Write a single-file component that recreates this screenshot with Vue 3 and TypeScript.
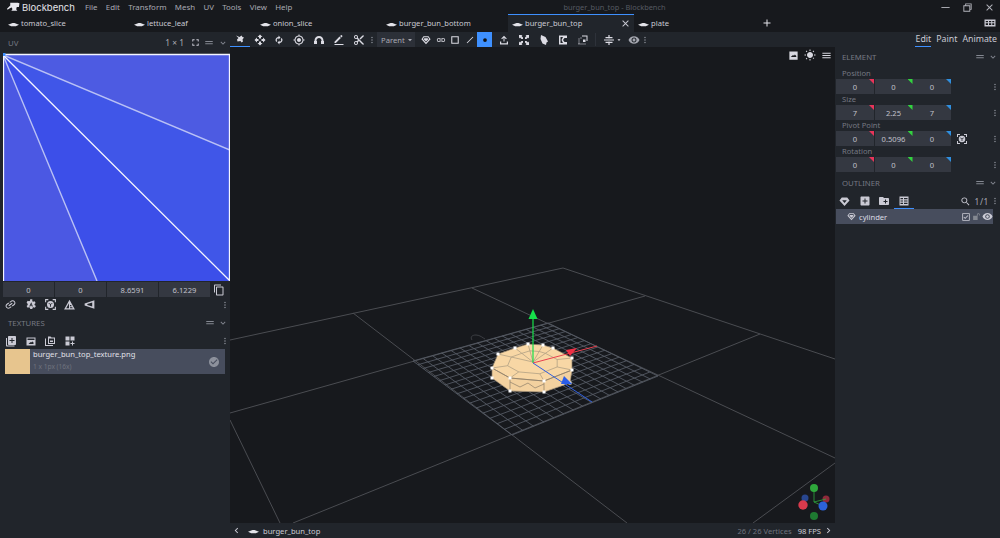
<script setup lang="ts">
interface Tab { name: string; active?: boolean }
interface Tool { icon: string; active?: boolean; underline?: boolean }

const icons: Record<string, string> = {
  close: 'M19 6.41 17.59 5 12 10.59 6.41 5 5 6.41 10.59 12 5 17.59 6.41 19 12 13.41 17.59 19 19 17.59 13.41 12z',
  add: 'M19 13h-6v6h-2v-6H5v-2h6V5h2v6h6z',
  menu: 'M3 18h18v-2H3zM3 13h18v-2H3zM3 6v2h18V6z',
  lines: 'M3 15h18v-2.4H3zM3 9.4h18V7H3z',
  more: 'M16.59 8.59 12 13.17 7.41 8.59 6 10l6 6 6-6z',
  left: 'M15.41 7.41 14 6l-6 6 6 6 1.41-1.41L10.83 12z',
  right: 'M10 6 8.59 7.41 13.17 12l-4.58 4.59L10 18l6-6z',
  dots: 'M12 8c1.1 0 2-.9 2-2s-.9-2-2-2-2 .9-2 2 .9 2 2 2zm0 2c-1.1 0-2 .9-2 2s.9 2 2 2 2-.9 2-2-.9-2-2-2zm0 6c-1.1 0-2 .9-2 2s.9 2 2 2 2-.9 2-2-.9-2-2-2z',
  move: 'M10 9h4V6h3l-5-5-5 5h3v3zm-1 1H6V7l-5 5 5 5v-3h3v-4zm14 2-5-5v3h-3v4h3v3l5-5zm-9 3h-4v3H7l5 5 5-5h-3v-3z',
  select: 'M4 3l7 3 4-3 2 3 3 1-3 4 1 4-3 2-2-3-6 1-1-4 3-3z',
  rotate: 'M11 3v3C7.5 6.4 5 9 5 12c0 1.6.6 3 1.6 4.1L8.700 14C8 13.200 7.600 12.700 7.600 12c0-1.800 1.400-3.200 3.400-3.500V11l4-4zM17.400 7.900 15.300 10c.7.800 1.100 1.300 1.100 2 0 1.800-1.400 3.200-3.400 3.500V13l-4 4 4 4v-3c3.500-.4 6-3 6-6 0-1.600-.6-3-1.600-4.100z',
  pivot: 'M12 8c-2.210 0-4 1.790-4 4s1.790 4 4 4 4-1.790 4-4-1.790-4-4-4zm8.940 3A8.994 8.994 0 0 0 13 3.060V1h-2v2.060A8.994 8.994 0 0 0 3.060 11H1v2h2.060A8.994 8.994 0 0 0 11 20.940V23h2v-2.060A8.994 8.994 0 0 0 20.940 13H23v-2h-2.060zM12 19c-3.870 0-7-3.130-7-7s3.130-7 7-7 7 3.130 7 7-3.130 7-7 7z',
  magnet: 'M12 4C7 4 3 8 3 13v1h-1v6h6v-6H7v-1c0-2.800 2.200-5 5-5s5 2.200 5 5v1h-1v6h6v-6h-1v-1c0-5-4-9-9-9z',
  brush: 'M3 15.250V18h2.750L15.800 7.940l-2.750-2.750zM18.700 5.040c.39-.39.39-1.020 0-1.410l-1.340-1.340c-.39-.39-1.020-.39-1.410 0l-1.830 1.830 2.750 2.750zM3 20h18v2H3z',
  cut: 'M9.640 7.640c.23-.5.36-1.050.36-1.640 0-2.210-1.790-4-4-4S2 3.790 2 6s1.790 4 4 4c.59 0 1.140-.13 1.640-.36L10 12l-2.360 2.360C7.140 14.130 6.590 14 6 14c-2.210 0-4 1.790-4 4s1.790 4 4 4 4-1.790 4-4c0-.59-.13-1.140-.36-1.640L12 14l7 7h3v-1L9.640 7.640zM6 8c-1.100 0-2-.89-2-2s.9-2 2-2 2 .89 2 2-.9 2-2 2zm0 12c-1.100 0-2-.89-2-2s.9-2 2-2 2 .89 2 2-.9 2-2 2zm6-7.500c-.28 0-.5-.22-.5-.5s.22-.5.5-.5.5.22.5.5-.22.5-.5.5zM19 3l-6 6 2 2 7-7V3z',
  gem: 'M6 3h12l5 7-11 12L1 10zM7.200 5.500 4.400 9.500 12 18l7.600-8.500-2.800-4zM8 8h8l1.500 2L12 15.500 6.500 10z',
  gemSolid: 'M6 3h12l5 7-11 12L1 10zM7 9l5 6 5-6z',
  link: 'M3.900 12c0-1.710 1.390-3.100 3.100-3.100h4V7H7c-2.760 0-5 2.240-5 5s2.240 5 5 5h4v-1.900H7c-1.710 0-3.100-1.390-3.100-3.100zM8 13h8v-2H8v2zm9-6h-4v1.900h4c1.710 0 3.100 1.390 3.100 3.100s-1.390 3.100-3.100 3.100h-4V17h4c2.760 0 5-2.240 5-5s-2.240-5-5-5z',
  square: 'M3 3h18v18H3zM5.500 5.500v13h13v-13z',
  slash: 'M4 18.500 18.500 4 20 5.500 5.500 20z',
  dot: 'M12 7.500a4.500 4.500 0 1 0 0 9 4.500 4.500 0 0 0 0-9z',
  upload: 'M11 15V7.500L8 10.500 6.500 9 12 3.500 17.500 9 16 10.500l-3-3V15zM4 15h2.500v3.500h11V15H20v6H4z',
  fit: 'M2 2h7l-2 2 3 3v3H7L4 7 2 9zM22 2v7l-2-2-3 3h-3V7l3-3-2-2zM2 22v-7l2 2 3-3h3v3l-3 3 2 2zM22 22h-7l2-2-3-3v-3h3l3 3 2-2z',
  pin: 'M6 2l9 4 5 9-3 2-1 5-7-3-4-9z',
  frame: 'M4 3h16v5h-5l-3 4 3 4h5v5H4zM7 6v12h5l-3-6 3-6z',
  dashed: 'M10 3h11v11h-2V5h-9zM3 9h2v2H3zM3 13h2v2H3zM3 17h2v2H3zM7 21h2v-2H7zM11 21h2v-2h-2zM15 21h2v-2h-2zM3 21h2v-2H3zM7 7h2v2H7zM12 11h5v5h-5z',
  align: 'M2 10.800h20v2.400H2zM10.800 2h2.400v7h-2.400zM10.800 15h2.400v7h-2.400zM5 6h14v2.500H5zM5 15.500h14V18H5z',
  caret: 'M6 9h12l-6 7z',
  eye: 'M12 4.500C7 4.500 2.730 7.610 1 12c1.730 4.390 6 7.500 11 7.500s9.270-3.110 11-7.500c-1.730-4.390-6-7.500-11-7.500zM12 17c-2.760 0-5-2.240-5-5s2.240-5 5-5 5 2.240 5 5-2.240 5-5 5zm0-8c-1.660 0-3 1.340-3 3s1.340 3 3 3 3-1.340 3-3-1.340-3-3-3z',
  picture: 'M3 3h18v18H3zM6 15.500h12v-2.500l-3-3-2 2.500-2-1.500z',
  sun: 'M6.760 4.840l-1.800-1.790-1.410 1.410 1.790 1.790 1.420-1.410zM4 11H1v2h3v-2zm9-10h-2v3h2V1zm7.450 3.460l-1.410-1.410-1.790 1.790 1.410 1.410 1.790-1.790zm-3.210 13.700l1.790 1.800 1.410-1.410-1.800-1.790-1.400 1.400zM20 11v2h3v-2h-3zm-8-5c-3.310 0-6 2.690-6 6s2.690 6 6 6 6-2.690 6-6-2.690-6-6-6zm-1 17h2v-3h-2v3zm-7.450-3.460l1.410 1.410 1.790-1.800-1.410-1.410-1.790 1.800z',
  fullscreen: 'M7 14H5v5h5v-2H7v-3zm-2-4h2V7h3V5H5v5zm12 7h-3v2h5v-5h-2v3zM14 5v2h3v3h2V5h-5z',
  copy: 'M16 1H4c-1.100 0-2 .9-2 2v14h2V3h12V1zm3 4H8c-1.100 0-2 .9-2 2v14c0 1.100.9 2 2 2h11c1.100 0 2-.9 2-2V7c0-1.100-.9-2-2-2zm0 16H8V7h11v14z',
  gear: 'M19.400 13c.04-.33.1-.66.1-1s-.06-.67-.1-1l2.100-1.650-2-3.460-2.490 1a7.300 7.300 0 0 0-1.730-1L15.400 2.500h-4l-.38 2.390c-.63.25-1.200.59-1.730 1l-2.490-1-2 3.460L6.900 11c-.04.33-.1.66-.1 1s.06.67.1 1l-2.100 1.650 2 3.460 2.490-1c.53.41 1.100.75 1.730 1l.38 2.390h4l.38-2.390c.63-.25 1.200-.59 1.730-1l2.490 1 2-3.460zM13.400 8l3 7.500h-2l-.5-1.500h-1.800l-.5 1.500h-2zm0 3-.5 1.500h1z',
  target: 'M2 2h6v2H4v4H2zM16 2h6v6h-2V4h-4zM2 16h2v4h4v2H2zM20 16h2v6h-6v-2h4zM12 5.500a6.500 6.500 0 1 0 0 13 6.500 6.500 0 0 0 0-13zm-3 3.500 3 2 3-2 .8 1.200-3 2V16h-1.600v-3.800l-3-2z',
  triangle: 'M12 3l10 18H2zM11 9.500 6 19h5zM13 19h5l-1-2h-4zM13 15h3l-1-2h-2z',
  wedge: 'M21 4v16L3 14v-4zM17 8.500 8 11v2l9 2.500z',
  importBox: 'M8 2h12c1.100 0 2 .9 2 2v14c0 1.100-.9 2-2 2H8c-1.100 0-2-.9-2-2V4c0-1.100.9-2 2-2zm5 4v4H9v2h4v4h2v-4h4v-2h-4V6zM2 6h2v14c0 .6.4 1 1 1h14v2H4c-1.100 0-2-.9-2-2z',
  image: 'M3 5h18v16H3zM5 7v3h14V7zM7 18h10v-3l-2-2-3 2-1-1z',
  folders: 'M8 3h5l2 2h7v13H8zM10 7v9h10V7zM2 7h2v13h14v2H2zM12 11h6v3h-6z',
  board: 'M3 3h8v8H3zM13 3h8v8h-8zM3 13h8v8H3zM16 13h2v3h3v2h-3v3h-2v-3h-3v-2h3z',
  addBox: 'M19 3H5c-1.110 0-2 .9-2 2v14c0 1.100.89 2 2 2h14c1.100 0 2-.9 2-2V5c0-1.100-.9-2-2-2zm-2 10h-4v4h-2v-4H7v-2h4V7h2v4h4v2z',
  newFolder: 'M20 6h-8l-2-2H4c-1.110 0-1.990.89-1.990 2L2 18c0 1.110.89 2 2 2h16c1.110 0 2-.89 2-2V8c0-1.110-.89-2-2-2zm-1 8h-3v3h-2v-3h-3v-2h3V9h2v3h3v2z',
  list: 'M3 3h18v18H3zM5 6v2.500h5V6zM12 6v2.500h7V6zM5 10.800v2.400h5v-2.400zM12 10.800v2.400h7v-2.400zM5 15.500V18h5v-2.500zM12 15.500V18h7v-2.500z',
  search: 'M15.500 14h-.79l-.28-.27C15.410 12.590 16 11.110 16 9.500 16 5.910 13.090 3 9.500 3S3 5.910 3 9.500 5.910 16 9.500 16c1.610 0 3.090-.59 4.230-1.570l.27.28v.79l5 4.990L20.490 19l-4.990-5zm-6 0C7.010 14 5 11.990 5 9.500S7.010 5 9.500 5 14 7.010 14 9.500 11.990 14 9.500 14z',
  checked: 'M4 3h16c.6 0 1 .4 1 1v16c0 .6-.4 1-1 1H4c-.6 0-1-.4-1-1V4c0-.6.4-1 1-1zm1 2v14h14V5zm5 11.500-4-4 1.400-1.400 2.600 2.600 6.100-6.100 1.400 1.400z',
  lock: 'M3 10h12v11H3zM17 3c-2.500 0-4 1.800-4 4v3h2V7c0-1.100.8-2 2-2s2 .9 2 2v2h2V7c0-2.200-1.500-4-4-4z',
  check: 'M12 2C6.480 2 2 6.480 2 12s4.480 10 10 10 10-4.480 10-10S17.520 2 12 2zm-2 15-5-5 1.410-1.410L10 14.170l7.590-7.590L19 8l-9 9z',
}

const menus = ['File', 'Edit', 'Transform', 'Mesh', 'UV', 'Tools', 'View', 'Help']

const tabs: Tab[] = [
  { name: 'tomato_slice' },
  { name: 'lettuce_leaf' },
  { name: 'onion_slice' },
  { name: 'burger_bun_bottom' },
  { name: 'burger_bun_top', active: true },
  { name: 'plate' },
]

const transformTools: Tool[] = [
  { icon: 'select', underline: true },
  { icon: 'move' },
  { icon: 'rotate' },
  { icon: 'pivot' },
  { icon: 'magnet' },
  { icon: 'brush' },
  { icon: 'cut' },
]

const modeTools: Tool[] = [
  { icon: 'gem' },
  { icon: 'link' },
  { icon: 'square' },
  { icon: 'slash' },
  { icon: 'dot', active: true },
]

const meshTools: Tool[] = [
  { icon: 'upload' },
  { icon: 'fit' },
  { icon: 'pin' },
  { icon: 'frame' },
  { icon: 'dashed' },
]

const uvValues = ['0', '0', '8.6591', '6.1229']
const uvTools = ['link', 'gear', 'target', 'triangle', 'wedge']
const textureTools = ['importBox', 'image', 'folders', 'board']

const elementGroups = [
  { label: 'Position', values: ['0', '0', '0'] },
  { label: 'Size', values: ['7', '2.25', '7'] },
  { label: 'Pivot Point', values: ['0', '0.5096', '0'], extra: true },
  { label: 'Rotation', values: ['0', '0', '0'] },
]

// floor grid: 16 x 16 cells squeezed into the perspective quad
type Pt = [number, number]
const project = (u: number, v: number): Pt => {
  const [x0, y0]: Pt = [413, 361]
  const [x1, y1]: Pt = [548, 323]
  const [x2, y2]: Pt = [658, 376]
  const [x3, y3]: Pt = [512, 435]
  const dx1 = x1 - x2, dx2 = x3 - x2, sx = x0 - x1 + x2 - x3
  const dy1 = y1 - y2, dy2 = y3 - y2, sy = y0 - y1 + y2 - y3
  const det = dx1 * dy2 - dx2 * dy1
  const g = (sx * dy2 - dx2 * sy) / det
  const h = (dx1 * sy - sx * dy1) / det
  const a = x1 - x0 + g * x1, b = x3 - x0 + h * x3
  const d = y1 - y0 + g * y1, e = y3 - y0 + h * y3
  const w = g * u + h * v + 1
  return [(a * u + b * v + x0) / w, (d * u + e * v + y0) / w]
}

const gridPath = Array.from({ length: 17 }, (_, i) => {
  const t = i / 16
  const [ax, ay] = project(t, 0)
  const [bx, by] = project(t, 1)
  const [cx, cy] = project(0, t)
  const [ex, ey] = project(1, t)
  return `M${ax} ${ay}L${bx} ${by}M${cx} ${cy}L${ex} ${ey}`
}).join('')

const floorLines = [
  [230, 340, 563, 268], [563, 268, 835, 359], [230, 413, 645, 296], [353, 313, 627, 523],
  [472, 288, 835, 458], [293, 523, 760, 334], [230, 420, 280, 523], [835, 463, 753, 523],
]

const topRing: Pt[] = [
  [492, 368], [498, 354], [515, 348], [528, 344], [543, 345],
  [553, 348], [572, 358], [572, 370], [544, 381], [510, 378],
]
const lowerRing: Pt[] = [[492, 378], [510, 391], [544, 392], [570, 383]]
const hub: Pt = [533, 362]
const inner = topRing.map(([x, y]): Pt => [hub[0] + (x - hub[0]) * 0.62, hub[1] + (y - hub[1]) * 0.62])
const toPoints = (pts: Pt[]) => pts.map((p) => p.join(',')).join(' ')
const spokes = topRing.map((p, i) => {
  const toHub = i >= 1 && i <= 5 ? `L${hub[0]} ${hub[1]}` : ''
  return `M${p[0]} ${p[1]}L${inner[i][0]} ${inner[i][1]}${toHub}`
}).join('')
const handles = [...topRing, ...lowerRing]
</script>

<template>
  <div class="app">
    <header class="titlebar">
      <svg class="logo" viewBox="0 0 24 18"><path d="M6 1h14l3 1-1 7h-4l-1 4 2 3H8l2-3-1-3-3 1-5 3-1-2 6-6z" /></svg>
      <span class="brand">Blockbench</span>
      <nav class="menus">
        <span v-for="item in menus" :key="item">{{ item }}</span>
      </nav>
      <span class="window-title">burger_bun_top - Blockbench</span>
      <div class="window-buttons">
        <svg viewBox="0 0 24 24"><path d="M3 11h18v2H3z" /></svg>
        <svg viewBox="0 0 24 24"><path d="M7 3h14v14h-3v4H3V7h4zM9 7h9v8h1V5H9zM5 9v10h11V9z" /></svg>
        <svg viewBox="0 0 24 24"><path :d="icons.close" /></svg>
      </div>
    </header>

    <div class="tabbar">
      <div v-for="tab in tabs" :key="tab.name" class="tab" :class="{ active: tab.active }">
        <svg class="tab-icon" viewBox="0 0 12 5"><path d="M0 2.800 5 .8h2l5 2-3.500 1.500h-5z" /></svg>
        <span>{{ tab.name }}</span>
        <svg v-if="tab.active" class="tab-close" viewBox="0 0 24 24"><path :d="icons.close" /></svg>
      </div>
      <svg class="tab-add" viewBox="0 0 24 24"><path :d="icons.add" /></svg>
      <svg class="tab-grid" viewBox="0 0 24 24"><path d="M1 5h22v14H1zM8 8H3.500v2.500H8zM14.500 8h-4.500v2.500h4.500zM20.500 8H16.500v2.500h4zM8 12.500H3.500V16H8zM14.500 12.500h-4.500V16h4.500zM20.500 12.500h-4V16h4z" /></svg>
    </div>

    <div class="workspace">
      <aside class="left">
        <div class="panel-head uv-head">
          <span class="panel-title">UV</span>
          <span class="uv-size">1 × 1</span>
          <svg class="ic11 uv-full" viewBox="0 0 24 24"><path :d="icons.fullscreen" /></svg>
          <svg class="ic10 dim" viewBox="0 0 24 24"><path :d="icons.lines" /></svg>
          <svg class="ic10 dim uv-more" viewBox="0 0 24 24"><path :d="icons.more" /></svg>
        </div>
        <svg class="uv-canvas" viewBox="3 53 227 228">
          <polygon points="3,55 3,281 97,281" fill="#4b58e3" />
          <polygon points="3,55 97,281 230,281" fill="#3c4fe9" />
          <polygon points="3,55 230,281 230,150" fill="#4056e8" />
          <polygon points="3,55 230,55 230,150" fill="#4d5be2" />
          <path d="M3 55 97 281M3 55 230 150" stroke="#b9c1f6" stroke-width="1.400" fill="none" />
          <path d="M3 55 230 281M3 54.500H230M3.500 54V281M229.500 54V281" stroke="#f4f5ff" stroke-width="1.300" fill="none" />
          <rect x="2.500" y="53" width="3" height="3" fill="#3e90ff" />
        </svg>
        <div class="uv-inputs">
          <div class="inputs">
            <span v-for="(value, i) in uvValues" :key="i" class="num uv-num">{{ value }}</span>
          </div>
          <svg class="ic12 uv-copy" viewBox="0 0 24 24"><path :d="icons.copy" /></svg>
        </div>
        <div class="icon-row">
          <span v-for="icon in uvTools" :key="icon" class="slot"><svg class="ic13" viewBox="0 0 24 24" :class="{ tilted: icon === 'link' }"><path :d="icons[icon]" /></svg></span>
          <svg class="ic10 dots dim" viewBox="0 0 24 24"><path :d="icons.dots" /></svg>
        </div>
        <div class="panel-head textures-head">
          <span class="panel-title">TEXTURES</span>
          <svg class="ic10 dim push" viewBox="0 0 24 24"><path :d="icons.lines" /></svg>
          <svg class="ic10 dim" viewBox="0 0 24 24"><path :d="icons.more" /></svg>
        </div>
        <div class="icon-row texture-tools">
          <span v-for="icon in textureTools" :key="icon" class="slot"><svg class="ic12" viewBox="0 0 24 24"><path :d="icons[icon]" /></svg></span>
          <svg class="ic10 dots dim" viewBox="0 0 24 24"><path :d="icons.dots" /></svg>
        </div>
        <div class="texture-row">
          <div class="swatch"></div>
          <div class="texture-text">
            <div class="texture-name">burger_bun_top_texture.png</div>
            <div class="texture-meta">1 x 1px (16x)</div>
          </div>
          <svg class="ic12 texture-check" viewBox="0 0 24 24"><path :d="icons.check" /></svg>
        </div>
      </aside>

      <div class="toolbar">
        <span v-for="tool in transformTools" :key="tool.icon" class="tool" :class="{ underline: tool.underline }">
          <svg class="ic12" viewBox="0 0 24 24"><path :d="icons[tool.icon]" /></svg>
        </span>
        <svg class="ic10 tool-dots dim" viewBox="0 0 24 24"><path :d="icons.dots" /></svg>
        <div class="parent-select">
          <span>Parent</span>
          <svg class="ic8" viewBox="0 0 24 24"><path :d="icons.caret" /></svg>
        </div>
        <div class="mode-group">
          <span v-for="tool in modeTools" :key="tool.icon" class="tool narrow" :class="{ active: tool.active }">
            <svg class="ic10" viewBox="0 0 24 24"><path :d="icons[tool.icon]" /></svg>
          </span>
        </div>
        <span v-for="tool in meshTools" :key="tool.icon" class="tool">
          <svg class="ic12" viewBox="0 0 24 24"><path :d="icons[tool.icon]" /></svg>
        </span>
        <span class="divider"></span>
        <span class="tool align">
          <svg class="ic12" viewBox="0 0 24 24"><path :d="icons.align" /></svg>
          <svg class="ic6" viewBox="0 0 24 24"><path :d="icons.caret" /></svg>
        </span>
        <span class="tool eye">
          <svg class="ic12" viewBox="0 0 24 24"><path :d="icons.eye" /></svg>
        </span>
        <svg class="ic10 tool-dots dim" viewBox="0 0 24 24"><path :d="icons.dots" /></svg>
        <div class="modes">
          <span class="mode current">Edit</span>
          <span class="mode">Paint</span>
          <span class="mode">Animate</span>
        </div>
      </div>

      <main class="center">
        <div class="viewport">
          <svg class="scene" viewBox="230 47 605 476">
            <g fill="none">
              <path
                v-for="(line, i) in floorLines"
                :key="i"
                :d="`M${line[0]} ${line[1]}L${line[2]} ${line[3]}`"
                stroke="#4a4c51"
                stroke-width="1"
              />
              <path :d="gridPath" stroke="#555a64" stroke-width="0.9" />
              <path d="M472 340c-2-3 0-5 4-5s7 3 9 4" stroke="#45474c" stroke-width="0.8" />
            </g>
            <polygon :points="toPoints([...topRing.slice(0, 8), ...lowerRing.slice().reverse(), [492, 368]])" fill="#f8d7a5" />
            <path
              d="M492 368 492 378 510 391 544 392 570 383 572 370 544 381 510 378ZM510 378V391M544 381V392"
              fill="#f3d19f"
              stroke="#8b7d68"
              stroke-width="0.7"
            />
            <polyline points="510,382 520,387 528,383 535,388 544,384" fill="none" stroke="#8b7d68" stroke-width="0.7" />
            <polygon :points="toPoints(topRing)" fill="none" stroke="#8b7d68" stroke-width="0.7" />
            <polygon :points="toPoints(inner)" fill="none" stroke="#a8997f" stroke-width="0.7" />
            <path :d="spokes" fill="none" stroke="#a8997f" stroke-width="0.7" />
            <rect v-for="(p, i) in handles" :key="i" :x="p[0] - 1.500" :y="p[1] - 1.500" width="3" height="3" fill="#fff" />
            <path d="M533 363V316" stroke="#16e04a" stroke-width="1.200" />
            <path d="M533 363 597 346" stroke="#e8414f" stroke-width="1" />
            <path d="M533 363 592 402" stroke="#2f5fe0" stroke-width="1" />
            <polygon points="533,309 537.500,319 528.500,319" fill="#16e04a" />
            <polygon points="566,350 577,348 570,356" fill="#ee2f45" />
            <polygon points="564,376 572,384 561,384" fill="#2a5de8" />
            <g>
              <circle cx="805" cy="498" r="3.500" fill="#28468f" />
              <circle cx="826" cy="499" r="3.500" fill="#8f2a3a" />
              <path d="M814 490V502L823 506M814 502 826 499" stroke="#2fa83c" stroke-width="0.8" fill="none" />
              <circle cx="814" cy="516" r="4" fill="#1e7a31" />
              <circle cx="803" cy="505" r="4.700" fill="#d83a4c" />
              <circle cx="823" cy="506" r="4.500" fill="#2c62d8" />
              <circle cx="814" cy="488" r="4" fill="#2fa83c" />
            </g>
          </svg>
          <div class="view-actions">
            <svg class="ic11" viewBox="0 0 24 24"><path :d="icons.picture" /></svg>
            <svg class="ic12" viewBox="0 0 24 24"><path :d="icons.sun" /></svg>
            <svg class="ic11" viewBox="0 0 24 24"><path :d="icons.menu" /></svg>
          </div>
        </div>
        <footer class="statusbar">
          <svg class="ic11" viewBox="0 0 24 24"><path :d="icons.left" /></svg>
          <svg class="status-cube" viewBox="0 0 12 5"><path d="M0 2.800 5 .8h2l5 2-3.500 1.500h-5z" /></svg>
          <span class="status-name">burger_bun_top</span>
          <span class="status-count">26 / 26 Vertices</span>
          <span class="status-fps">98 FPS</span>
          <svg class="ic11" viewBox="0 0 24 24"><path :d="icons.right" /></svg>
        </footer>
      </main>

      <aside class="right">
        <div class="panel-head element-head">
          <span class="panel-title">ELEMENT</span>
          <svg class="ic10 dim push" viewBox="0 0 24 24"><path :d="icons.lines" /></svg>
          <svg class="ic10 dim" viewBox="0 0 24 24"><path :d="icons.more" /></svg>
        </div>
        <div v-for="group in elementGroups" :key="group.label" class="field">
          <div class="field-label">{{ group.label }}</div>
          <div class="field-row">
            <div class="inputs triple">
              <span v-for="(value, i) in group.values" :key="i" class="num axis" :class="`axis-${i}`">{{ value }}</span>
            </div>
            <svg v-if="group.extra" class="ic12 pivot-btn" viewBox="0 0 24 24"><path :d="icons.target" /></svg>
            <svg class="ic10 dots dim" viewBox="0 0 24 24"><path :d="icons.dots" /></svg>
          </div>
        </div>
        <div class="panel-head outliner-head">
          <span class="panel-title">OUTLINER</span>
          <svg class="ic10 dim push" viewBox="0 0 24 24"><path :d="icons.lines" /></svg>
          <svg class="ic10 dim" viewBox="0 0 24 24"><path :d="icons.more" /></svg>
        </div>
        <div class="outliner-tools">
          <span class="slot"><svg class="ic11" viewBox="0 0 24 24"><path :d="icons.gemSolid" /></svg></span>
          <span class="slot"><svg class="ic12" viewBox="0 0 24 24"><path :d="icons.addBox" /></svg></span>
          <span class="slot"><svg class="ic12" viewBox="0 0 24 24"><path :d="icons.newFolder" /></svg></span>
          <span class="slot underline"><svg class="ic12" viewBox="0 0 24 24"><path :d="icons.list" /></svg></span>
          <svg class="ic11 push" viewBox="0 0 24 24"><path :d="icons.search" /></svg>
          <span class="count">1/1</span>
          <svg class="ic10 dots dim" viewBox="0 0 24 24"><path :d="icons.dots" /></svg>
        </div>
        <div class="outliner-row">
          <svg class="ic9" viewBox="0 0 24 24"><path :d="icons.gem" /></svg>
          <span class="node-name">cylinder</span>
          <svg class="ic10 push" viewBox="0 0 24 24"><path :d="icons.checked" /></svg>
          <svg class="ic9 dim" viewBox="0 0 24 24"><path :d="icons.lock" /></svg>
          <svg class="ic11" viewBox="0 0 24 24"><path :d="icons.eye" /></svg>
        </div>
      </aside>
    </div>
  </div>
</template>

<style scoped>
.app {
  display: flex;
  flex-direction: column;
  width: 1000px;
  height: 538px;
  overflow: hidden;
  background: #17191d;
  color: #cacad4;
  font-family: 'Noto Sans', sans-serif;
  font-size: 7.6px;
}

svg {
  display: block;
  flex: none;
  fill: currentColor;
}

.ic6 { width: 6px; height: 6px; }
.ic8 { width: 8px; height: 8px; }
.ic9 { width: 9px; height: 9px; }
.ic10 { width: 10px; height: 10px; }
.ic11 { width: 11px; height: 11px; }
.ic12 { width: 12px; height: 12px; }
.ic13 { width: 13px; height: 13px; }
.dim { color: #848891; }
.push { margin-left: auto; }
.tilted { transform: rotate(-35deg); }

.titlebar {
  display: flex;
  align-items: center;
  height: 14px;
  flex: none;
  padding-left: 7px;
}

.logo {
  width: 13px;
  height: 10px;
  color: #e8e8ee;
}

.brand {
  margin-left: 2px;
  font-family: Inter, sans-serif;
  font-size: 9.5px;
  color: #e4e4ea;
}

.menus {
  display: flex;
  gap: 8.3px;
  margin-left: 10px;
  font-size: 7.9px;
  color: #a9aab3;
}

.window-title {
  margin-left: 271px;
  font-size: 7.4px;
  color: #565a62;
}

.window-buttons {
  display: flex;
  gap: 11px;
  margin-left: auto;
  margin-right: 5px;
  color: #b4b5bd;
}

.window-buttons svg {
  width: 11px;
  height: 11px;
}

.tabbar {
  display: flex;
  align-items: stretch;
  height: 18px;
  flex: none;
}

.tab {
  display: flex;
  align-items: center;
  width: 126px;
  box-sizing: border-box;
  padding: 0 0 1px 8px;
}

.tab.active {
  background: #21252b;
  border-top: 1px solid #3e90ff;
  padding-left: 4px;
  margin-left: 4px;
  margin-right: -4px;
}

.tab-icon {
  width: 11px;
  height: 5px;
  margin: 3px 2px 0 0;
  color: #e4e4ea;
}

.tab-close {
  width: 11px;
  height: 11px;
  margin-left: auto;
  margin-right: 3px;
}

.tab-add {
  width: 12px;
  height: 12px;
  align-self: center;
  margin-left: 5px;
  color: #e4e4ea;
}

.tab-grid {
  width: 12px;
  height: 12px;
  align-self: center;
  margin-left: auto;
  margin-right: 4px;
}

.workspace {
  display: grid;
  grid-template-columns: 230px 605px 165px;
  grid-template-rows: 15px 491px;
  flex: 1;
  min-height: 0;
}

.left {
  grid-row: 1 / 3;
  display: flex;
  flex-direction: column;
  background: #21252b;
}

.panel-head {
  display: flex;
  align-items: center;
  gap: 3px;
  padding: 0 2px 0 8px;
  flex: none;
}

.panel-title {
  color: #767983;
  font-size: 7.8px;
}

.uv-head { height: 21px; }
.uv-size { margin-left: auto; font-size: 8.4px; color: #a9aab3; }
.uv-full { margin: 0 0 0 3px; }
.uv-more { margin-left: 1px; }

.uv-canvas {
  width: 227px;
  height: 228px;
  margin-left: 3px;
  flex: none;
}

.uv-inputs {
  display: flex;
  align-items: center;
  height: 15px;
  margin-top: 1px;
  padding-left: 3px;
  flex: none;
}

.inputs {
  display: flex;
  gap: 1px;
  height: 15px;
}

.num {
  display: flex;
  align-items: center;
  justify-content: center;
  background: #343841;
  color: #c0c0ca;
}

.uv-num { width: 51px; }
.uv-copy { margin-left: 3px; }

.icon-row {
  display: flex;
  align-items: center;
  height: 15px;
  padding-left: 1px;
  flex: none;
}

.slot {
  display: flex;
  align-items: center;
  justify-content: center;
  width: 19.7px;
  height: 15px;
}

.dots { margin-left: auto; }

.textures-head {
  height: 21px;
}

.texture-tools { height: 16px; }

.texture-row {
  display: flex;
  align-items: stretch;
  width: 220px;
  height: 25px;
  margin-left: 5px;
  background: #474d5d;
  flex: none;
}

.swatch {
  width: 25px;
  background: #e7c58e;
}

.texture-text {
  padding-left: 3px;
  line-height: 11.5px;
}

.texture-name { color: #e0e0e8; }
.texture-meta { color: #6f737e; font-size: 6.6px; }

.texture-check {
  align-self: center;
  margin-left: auto;
  margin-right: 5px;
  color: #8d919c;
}

.toolbar {
  grid-column: 2 / 4;
  display: flex;
  align-items: center;
  background: #21252b;
}

.tool {
  display: flex;
  align-items: center;
  justify-content: center;
  width: 19.8px;
  height: 15px;
  flex: none;
  color: #dcdce4;
}

.tool.underline { box-shadow: inset 0 -1px 0 #3e90ff; }
.tool.narrow { width: 14.5px; }

.tool.active {
  width: 15px;
  background: #3e90ff;
  color: #111;
}

.tool-dots { margin-left: -1.5px; }

.parent-select {
  display: flex;
  align-items: center;
  justify-content: space-between;
  width: 38px;
  height: 15px;
  padding: 0 1px 0 4px;
  box-sizing: border-box;
  background: #2c3038;
  color: #a9aab3;
}

.mode-group {
  display: flex;
  padding-left: 4px;
  margin-right: 2px;
}

.divider {
  width: 1px;
  height: 13px;
  margin: 0 2px;
  background: #2e323a;
}

.align {
  width: 28px;
  gap: 1px;
}

.eye {
  width: 15px;
  color: #a4a6af;
}

.modes {
  display: flex;
  gap: 5px;
  margin-left: auto;
  margin-right: 3px;
  height: 15px;
  font-size: 8.8px;
}

.mode { line-height: 14px; }
.mode.current { box-shadow: inset 0 -1px 0 #3e90ff; }

.center {
  grid-column: 2;
  grid-row: 2;
  display: flex;
  flex-direction: column;
  min-height: 0;
}

.viewport {
  position: relative;
  flex: 1;
  min-height: 0;
}

.scene {
  position: absolute;
  inset: 0;
  width: 100%;
  height: 100%;
}

.view-actions {
  position: absolute;
  top: 2px;
  right: 3px;
  display: flex;
  align-items: center;
  gap: 5px;
  color: #d8d8e0;
}

.statusbar {
  display: flex;
  align-items: center;
  height: 15px;
  padding: 0 1px;
  flex: none;
  background: #21252b;
}

.status-cube {
  width: 11px;
  height: 5px;
  margin: 2px 0 0 6px;
  color: #e4e4ea;
}

.status-name { margin-left: 4px; }
.status-count { margin-left: auto; color: #6f737e; }
.status-fps { margin: 0 2px 0 6px; }

.right {
  grid-column: 3;
  grid-row: 2;
  display: flex;
  flex-direction: column;
  background: #21252b;
}

.element-head { height: 20px; margin-bottom: 1px; padding-left: 7px; }

.field {
  height: 26px;
  flex: none;
}

.field-label {
  height: 11px;
  padding-left: 7px;
  line-height: 11px;
  color: #767983;
}

.field-row {
  display: flex;
  align-items: center;
  height: 15px;
  padding: 0 0 0 1px;
}

.triple { gap: 0.5px; }

.axis {
  position: relative;
  width: 38px;
}

.axis::after {
  content: '';
  position: absolute;
  top: 0;
  right: 0;
  width: 5px;
  height: 5px;
  clip-path: polygon(0 0, 100% 0, 100% 100%);
}

.axis-0::after { background: #e9345a; }
.axis-1::after { background: #32d33f; }
.axis-2::after { background: #2f8fe0; }
.pivot-btn { margin-left: 5px; }

.outliner-head { height: 20px; margin-top: 1px; padding-left: 7px; }

.outliner-tools {
  display: flex;
  align-items: center;
  height: 16px;
}

.slot.underline { box-shadow: 0 1px 0 #3e90ff; height: 14px; }
.count { margin-left: 4px; color: #a9aab3; font-size: 8.4px; letter-spacing: 0.6px; }
.outliner-tools .dots { margin-left: 1px; }

.outliner-row {
  display: flex;
  align-items: center;
  gap: 1px;
  width: 157px;
  height: 15px;
  margin-left: 1px;
  padding: 0 0 0 11px;
  box-sizing: border-box;
  background: #474d5d;
}

.node-name { margin-left: 2px; color: #dcdce4; }
</style>

<style>
html,
body {
  margin: 0;
  background: #17191d;
}
</style>
